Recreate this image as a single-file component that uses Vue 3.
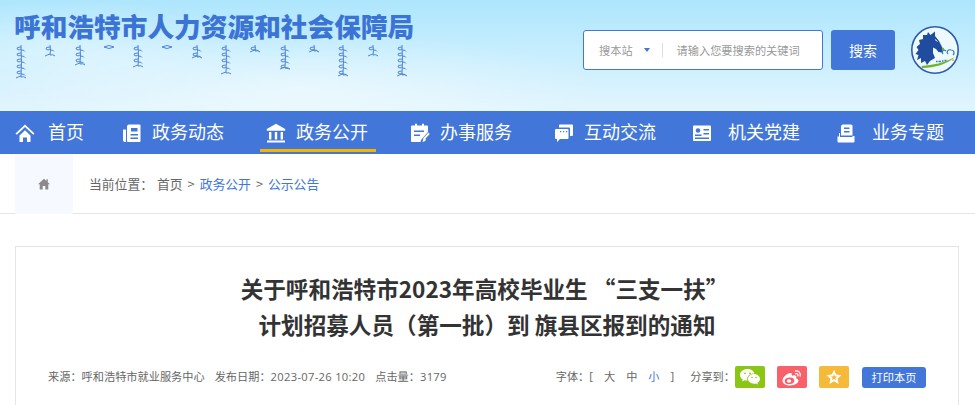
<template>
  <div class="page">
    <header class="top">
      <div class="brand">
        <h1 class="brand-name">呼和浩特市人力资源和社会保障局</h1>
        <div class="script-row" aria-hidden="true">
          <svg v-for="(m, i) in scriptMarks" :key="i" class="script-mark" width="14" :height="m.h" :viewBox="`0 0 14 ${m.h}`">
            <path :d="m.d" />
          </svg>
        </div>
      </div>
      <div class="tools">
        <div class="search">
          <span class="scope">搜本站</span>
          <i class="caret"></i>
          <i class="divider"></i>
          <span class="hint">请输入您要搜索的关键词</span>
        </div>
        <button class="search-btn">搜索</button>
        <svg class="emblem" width="50" height="50" viewBox="0 0 50 50">
          <circle cx="25" cy="25" r="23.200" fill="#eef9fe" stroke="#2d5cad" stroke-width="1.600" />
          <path d="M18 7l2.500 3L25 6.500V11l4 5 4 8-1 3.500-3.500-.5-2.500-3-3-1.500V28l2 5-5 3-3 4-2-4-4 2v-5l-4 2 1.500-5-3-1 3-4-2-3 3.500-3-1-4 4-1v-4h4z" fill="#1f4c9f" />
          <path d="M25 14.500l2.500 2" stroke="#eef9fe" stroke-width="1" fill="none" />
          <path d="M11.500 41c11-1 23-3 33.500-9-8 7-20 11-33 11z" fill="#6fb52c" />
          <path d="M26 36.500h1.500m1 0H31m1-.5h1.500m1-.5h2" stroke="#2d7fb8" stroke-width="1.300" fill="none" />
          <path d="M33 29c-2-3 1-5 3-3M38 29c-2-2 0-5 3-4 3 0 4 3 2 5" stroke="#2d7fb8" stroke-width="1.200" fill="none" />
          <circle cx="33" cy="24" r="1.200" fill="#6fb52c" />
          <circle cx="43" cy="35" r="1" fill="#e5b52a" />
        </svg>
      </div>
    </header>

    <nav class="nav">
      <a v-for="item in navItems" :key="item.label" class="nav-item" :class="{ active: item.active, wide: item.wide, first: item.first }">
        <svg class="nav-icon" width="20" height="20" viewBox="0 0 20 20" v-html="item.icon"></svg>
        <span class="nav-label">{{ item.label }}</span>
      </a>
    </nav>

    <div class="crumbs">
      <div class="crumb-home">
        <svg width="12" height="12" viewBox="0 0 12 12"><path d="M6 .8L0 6.200h1.700v5.200h3V8h2.600v3.400h3V6.200H12L9.800 4.200V1.300H8.400v1.600z" fill="#8a8a8a" /></svg>
      </div>
      <div class="crumb-path">
        <span class="crumb-label">当前位置：</span>
        <span>首页</span>
        <span class="sep">&gt;</span>
        <a>政务公开</a>
        <span class="sep">&gt;</span>
        <a>公示公告</a>
      </div>
    </div>

    <article class="card">
      <h2 class="title">
        <span class="line-one">关于呼和浩特市2023年高校毕业生 “三支一扶”</span><br />
        计划招募人员（第一批）到 旗县区报到的通知
      </h2>
      <div class="meta">
        <div class="meta-left">
          <span>来源：呼和浩特市就业服务中心</span>
          <span>发布日期：<b class="num">2023-07-26 10:20</b></span>
          <span>点击量：<b class="num">3179</b></span>
        </div>
        <div class="meta-right">
          <span class="font-size">字体：<i>[</i><i>大</i><i>中</i><a>小</a><i>]</i></span>
          <span class="share-label">分享到：</span>
          <a class="share wechat">
            <svg width="20" height="16" viewBox="0 0 20 16">
              <path d="M7.500 0C3.400 0 0 2.600 0 5.900c0 1.900 1.100 3.500 2.800 4.600L2.100 12.500l2.500-1.300c.9.300 1.800.4 2.900.4-.2-.6-.3-1.200-.3-1.800 0-3 3-5.400 6.700-5.400h.6C13.800 2 10.900 0 7.500 0z" fill="#fff" />
              <path d="M20 9.800c0-2.700-2.700-4.900-6-4.900s-6 2.200-6 4.900 2.700 4.900 6 4.900c.7 0 1.400-.1 2-.3l1.900 1-.5-1.700c1.600-.9 2.600-2.300 2.600-3.900z" fill="#fff" />
              <circle cx="5" cy="4.300" r=".9" fill="#8cc614" /><circle cx="10" cy="4.300" r=".9" fill="#8cc614" />
              <circle cx="12" cy="8.500" r=".8" fill="#8cc614" /><circle cx="16" cy="8.500" r=".8" fill="#8cc614" />
            </svg>
          </a>
          <a class="share weibo">
            <svg width="20" height="17" viewBox="0 0 20 17">
              <path d="M8 16.500c-4 0-7.500-1.800-7.500-4.800 0-1.600 1-3.400 2.800-5.100C5.700 4.300 8.400 3.300 9.500 4.400c.5.500.5 1.400.2 2.400 1.500-.6 3.600-.9 4.400.2.400.6.400 1.400 0 2.300 1.400.4 2.300 1.200 2.300 2.500 0 2.300-3.600 4.700-8.400 4.700z" fill="#fff" />
              <ellipse cx="7.500" cy="11.800" rx="4.800" ry="3.300" fill="#f9616a" transform="rotate(-8 7.500 11.800)" />
              <ellipse cx="7" cy="12" rx="2.200" ry="1.800" fill="#fff" />
              <path d="M13.500 2c3-.6 5.500 2 4.600 5M13.800 4.600c1.500-.3 2.500 1 2.100 2.300" stroke="#fff" stroke-width="1.300" stroke-linecap="round" fill="none" />
            </svg>
          </a>
          <a class="share star">
            <svg width="16" height="16" viewBox="0 0 16 16">
              <path d="M8 .8l2.200 4.800 5.200.6-3.900 3.500 1.100 5.200L8 12.300 3.400 14.900l1.100-5.200L.6 6.200l5.200-.6z" fill="#fff" />
              <path d="M8 5.200l.9 2 2.200.3-1.600 1.500.4 2.200L8 10.100l-1.900 1.100.4-2.200L4.900 7.500l2.200-.3z" fill="#f6ba3b" />
            </svg>
          </a>
          <button class="print">打印本页</button>
        </div>
      </div>
    </article>
  </div>
</template>

<script setup>
// curled stem, only a stand-in for the decorative line under the logo title
const markHeights = [34, 12, 21, 4, 23, 4, 14, 30, 8, 25, 8, 32, 12, 32];
const scriptMarks = markHeights.map((h) => {
  let d;
  if (h < 6) {
    d = `M2 2q5 -3 10 0q-5 3 -10 0z`;
  } else {
    d = `M7 0q1 ${h / 2} 0 ${h - 2}`;
    for (let y = 2; y < h - 4; y += 6) {
      d += `M7 ${y}q-5 0 -4 2q2 2 4 0M7 ${y + 3}q4 0 4 1.500`;
    }
    d += `M7 ${h - 2}q3 -1 5 1M7 ${h - 3}q-3 1 -5 2`;
  }
  return { h, d };
});

const white = 'fill="#fff"';
const navItems = [
  {
    label: '首页',
    first: true,
    icon: `<path d="M10 1.500L.5 10.500l1.300 1.200L10 4l8.200 7.700 1.300-1.200z" ${white}/><path d="M4.500 12.500L10 7.300l5.500 5.200V19h-3.500v-4.500H8V19H4.500z" ${white}/>`,
  },
  {
    label: '政务动态',
    icon: `<path d="M7 1.500h10.500a1 1 0 0 1 1 1V18a1 1 0 0 1-1 1H6a1 1 0 0 1-1-1V3.500a2 2 0 0 1 2-2z" ${white}/><path d="M1.500 6.500H4V19H3a2 2 0 0 1-2-2V7z" ${white}/><path d="M9 5h6.500v3.500H9zM8.500 11h7.500v1.400H8.500zM8.500 14.500h7.500v1.400H8.500z" fill="#4277d9"/>`,
  },
  {
    label: '政务公开',
    active: true,
    icon: `<path d="M10 .8L.8 6v1.800h18.400V6z" ${white}/><path d="M3 9h2.400v7.500H3zM8.800 9h2.400v7.500H8.800zM14.600 9H17v7.500h-2.400zM1 17.500h18v2H1z" ${white}/>`,
  },
  {
    label: '办事服务',
    icon: `<path d="M2 2.500h15a1 1 0 0 1 1 1V9l-7 8-.5 2H2a1 1 0 0 1-1-1V3.500a1 1 0 0 1 1-1z" ${white}/><path d="M5 .8h2v4H5zM12 .8h2v4h-2z" ${white}/><path d="M4 7.500h10v1.500H4zM4 11.500h6v1.500H4z" fill="#4277d9"/><path d="M12.500 19l1-4 5-5.500 1.200 1.500-5 5.500 1.500-.5-1 2z" ${white}/>`,
  },
  {
    label: '互动交流',
    icon: `<path d="M6 1.500h12a1 1 0 0 1 1 1V12a1 1 0 0 1-1 1h-2V5.500a1 1 0 0 0-1-1H5V2.500a1 1 0 0 1 1-1z" ${white}/><path d="M2 6h11.500a1 1 0 0 1 1 1V15a1 1 0 0 1-1 1H6l-3 3v-3H2a1 1 0 0 1-1-1V7a1 1 0 0 1 1-1z" ${white}/><path d="M9 8h1.200v1.200H9zM6 8h1.200v1.200H6zM12 8h1.200v1.200H12z" fill="#4277d9"/>`,
  },
  {
    label: '机关党建',
    wide: true,
    icon: `<path d="M2 2.500h16a1 1 0 0 1 1 1V17a1 1 0 0 1-1 1H2a1 1 0 0 1-1-1V3.500a1 1 0 0 1 1-1z" ${white}/><circle cx="6" cy="7.500" r="2.300" fill="#4277d9"/><path d="M3 11.500h6.500V13H3zM11.500 6H17v1.500h-5.500zM11.500 10H17v1.500h-5.500zM3 14.500h14V16H3z" fill="#4277d9"/>`,
  },
  {
    label: '业务专题',
    wide: true,
    icon: `<path d="M7 1.500h8a1.500 1.500 0 0 1 1.500 1.500v9.500H5V3.500a2 2 0 0 1 2-2z" ${white}/><path d="M8 4.500h5.500V6H8zM8 8h5.500v1.500H8z" fill="#4277d9"/><path d="M1.500 13.500H3V10h1v4h12.500v-1h2v5.500a1 1 0 0 1-1 1h-15a1 1 0 0 1-1-1z" ${white}/>`,
  },
];
</script>

<style>
body {
  margin: 0;
  overflow: hidden;
}
</style>

<style scoped>
.page {
  width: 975px;
  height: 405px;
  overflow: hidden;
  background: #fff;
  font-family: "Noto Sans CJK SC", "Liberation Sans", sans-serif;
  color: #666;
}
.top {
  height: 111px;
  box-sizing: border-box;
  padding: 11px 15px 0 14px;
  display: flex;
  justify-content: space-between;
  background:
    radial-gradient(ellipse 180px 50px at 70px 50px, rgba(255, 255, 255, 0.35), transparent),
    radial-gradient(ellipse 300px 60px at 300px 90px, rgba(255, 255, 255, 0.45), transparent),
    linear-gradient(180deg, #aee6fd 0%, #c8eefe 50%, #e2f5fe 100%);
}
.brand-name {
  margin: 0;
  font-size: 26.700px;
  line-height: 30px;
  font-weight: 900;
  color: #3c74d6;
  white-space: nowrap;
}
.script-row {
  display: grid;
  grid-template-columns: repeat(14, 29.300px);
  align-items: start;
  margin-top: 4px;
}
.script-mark {
  display: block;
}
.script-mark path {
  fill: none;
  stroke: #4f84da;
  stroke-width: 1;
}
.tools {
  display: flex;
  align-items: center;
  height: 78px;
}
.search {
  box-sizing: border-box;
  width: 240px;
  height: 40px;
  background: #fff;
  border: 1px solid #4277d9;
  border-radius: 3px;
  display: flex;
  align-items: center;
  padding-left: 15px;
  font-size: 11.200px;
  color: #999;
}
.caret {
  width: 0;
  height: 0;
  margin-left: 11px;
  border: 3.500px solid transparent;
  border-top: 4px solid #4277d9;
  border-bottom: 0;
}
.divider {
  width: 1px;
  height: 14px;
  margin: 0 14px 0 12px;
  background: #ddd;
}
.search-btn {
  width: 64px;
  height: 40px;
  margin-left: 8px;
  border: 0;
  border-radius: 3px;
  background: #4277d9;
  color: #fff;
  font: 14px "Noto Sans CJK SC", sans-serif;
}
.emblem {
  margin-left: 15px;
}
.nav {
  height: 43px;
  background: #4277d9;
  display: flex;
  gap: 28px;
  padding-left: 9px;
}
.nav-item {
  box-sizing: border-box;
  width: 116px;
  padding: 0 8px 0 6px;
  display: flex;
  align-items: center;
  justify-content: space-between;
  position: relative;
  font-size: 18px;
  color: #fff;
}
.nav-label {
  padding-bottom: 3px;
}
.nav-item.first {
  width: 79px;
  padding-right: 4px;
}
.nav-item.wide {
  padding-left: 0;
}
.nav-item.active::after {
  content: "";
  position: absolute;
  left: 0;
  right: 0;
  bottom: 2px;
  height: 3px;
  background: #f5b400;
}
.crumbs {
  box-sizing: border-box;
  height: 60px;
  padding-left: 15px;
  border-bottom: 1px solid #e5e5e5;
  display: flex;
}
.crumb-home {
  width: 58px;
  height: 60px;
  background: #f6f9ff;
  display: flex;
  align-items: center;
  justify-content: center;
}
.crumb-path {
  display: flex;
  align-items: center;
  padding-left: 16px;
  padding-bottom: 1px;
  font-size: 12.800px;
  color: #666;
}
.crumb-label {
  margin-right: 4px;
}
.crumb-path a {
  color: #4277d9;
}
.sep {
  margin: 0 5px;
}
.card {
  box-sizing: border-box;
  height: 300px;
  margin: 32px 16px 0 15px;
  padding: 24px 32px 0;
  border: 1px solid #e5e5e5;
}
.title {
  margin: 0;
  font-size: 22.600px;
  line-height: 36px;
  font-weight: 700;
  color: #333;
  text-align: center;
}
.line-one {
  margin-right: 5px;
}
.meta {
  display: flex;
  justify-content: space-between;
  align-items: center;
  margin-top: 23px;
  height: 22px;
  font-size: 11.200px;
  font-family: "Open Sans", "Noto Sans CJK SC", sans-serif;
}
.meta-left {
  display: flex;
  gap: 10px;
  padding-bottom: 3px;
}
.num {
  font-weight: 400;
  letter-spacing: 0.3px;
}
.meta-right {
  display: flex;
  align-items: center;
}
.font-size {
  display: flex;
  padding-bottom: 3px;
}
.font-size i {
  font-style: normal;
  margin-right: 11px;
}
.font-size a {
  color: #4277d9;
  margin-right: 11px;
}
.share-label {
  margin-left: 5px;
  padding-bottom: 3px;
}
.share {
  width: 30px;
  height: 22px;
  margin-right: 12px;
  border-radius: 2px;
  display: flex;
  align-items: center;
  justify-content: center;
}
.wechat {
  background: #8cc614;
}
.weibo {
  background: #f9616a;
}
.star {
  background: #f6ba3b;
}
.print {
  width: 64px;
  height: 21px;
  margin-left: 1px;
  padding: 0;
  border: 0;
  border-radius: 3px;
  background: #4277d9;
  color: #fff;
  font: 11.200px "Noto Sans CJK SC", sans-serif;
}
</style>
